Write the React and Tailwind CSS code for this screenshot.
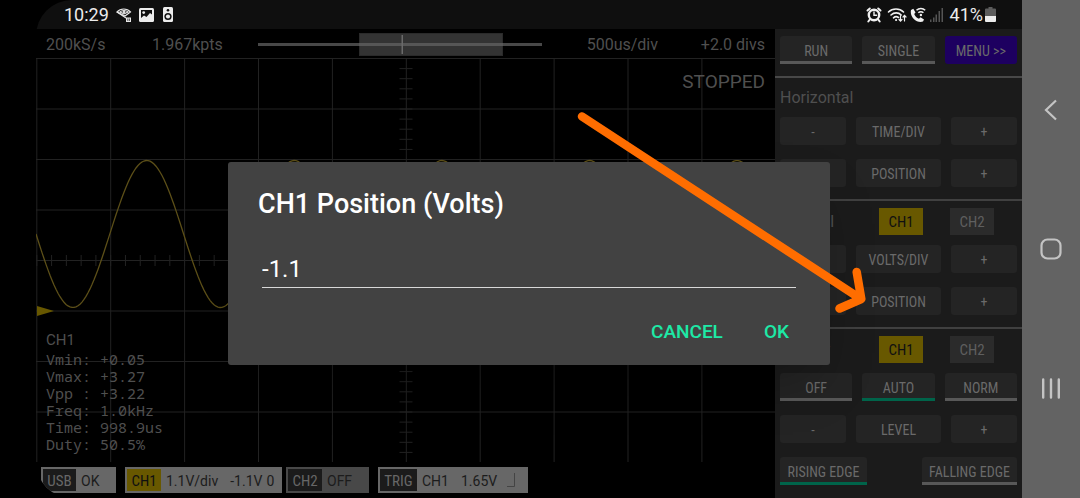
import React from "react";

const PLOT_W = 739;
const PLOT_H = 404;
const DIV_X = PLOT_W / 10;
const DIV_Y = PLOT_H / 8;

const wavePoints = Array.from({ length: 370 }, (_, i) => {
  const x = i * 2;
  const y = 176 + 73.5 * Math.sin((2 * Math.PI * x) / 147.6);
  return `${x},${y.toFixed(1)}`;
}).join(" ");

const measurements = [
  "Vmin: +0.05",
  "Vmax: +3.27",
  "Vpp : +3.22",
  "Freq: 1.0kHz",
  "Time: 998.9us",
  "Duty: 50.5%",
];

const condensed = "font-['Roboto_Condensed','Roboto',sans-serif]";

function StatusBar() {
  return (
    <header className="flex h-[29px] items-center bg-[#0f0f0f] pl-7 pr-[26px] text-[#ececec]">
      <span className="w-[52px] text-lg leading-5">10:29</span>
      <div className="flex items-center gap-[7px]">
        <svg width="16" height="16" viewBox="0 0 16 16" fill="none" stroke="#e8e8e8" aria-hidden="true">
          <path d="M1 5C4.500 1 11 1 14.500 5L9 9z" strokeWidth="1.200" />
          <path d="M1 5L10 11M4 5C6 3 10 3 12 5L8 7z" strokeWidth="1.100" />
          <circle cx="8" cy="5" r="1" fill="#e8e8e8" />
          <path d="M10 10.500h5v4.500h-5z" fill="#e8e8e8" stroke="none" />
          <path d="M11.800 11.500v2.500M13.400 11.500v2.500" stroke="#333" strokeWidth=".8" />
        </svg>
        <svg width="15" height="14" viewBox="0 0 15 14" aria-hidden="true">
          <rect width="15" height="14" rx="1.500" fill="#ececec" />
          <path d="M2 2h11v4.500L11 5L7.500 9L5 7.500L2 10z" fill="#0f0f0f" />
          <circle cx="4.700" cy="4.600" r="1.400" fill="#ececec" />
        </svg>
        <svg className="ml-0.5" width="10" height="15" viewBox="0 0 10 15" aria-hidden="true">
          <rect width="10" height="15" rx="1.500" fill="#ececec" />
          <circle cx="5" cy="3.300" r="1.300" fill="#0f0f0f" />
          <circle cx="5" cy="9.500" r="3.600" fill="#0f0f0f" />
          <circle cx="5" cy="9.500" r="2.100" fill="#ececec" />
        </svg>
      </div>
      <div className="ml-auto flex items-center">
        <svg className="mr-[5px]" width="16" height="16" viewBox="0 0 16 16" fill="none" stroke="#f0f0f0" strokeLinecap="round" aria-hidden="true">
          <circle cx="8" cy="8" r="5.200" strokeWidth="2.400" />
          <path d="M8 5v3.200h2.600" strokeWidth="1.400" />
          <path d="M1.500 3.500L3.800 1.500M14.500 3.500L12.200 1.500M3.800 12.500L2.300 14.500M12.200 12.500L13.700 14.500" strokeWidth="2" />
        </svg>
        <svg className="mr-[3px]" width="20" height="16" viewBox="0 0 20 16" fill="none" stroke="#f0f0f0" strokeLinecap="round" aria-hidden="true">
          <path d="M1.500 5C5.500 1 12.500 1 16.500 5" strokeWidth="1.600" />
          <path d="M4 8C7 5.200 11.500 5.200 14.200 8" strokeWidth="1.600" />
          <path d="M6.500 10.800C8 9.500 10 9.500 11.500 10.500" strokeWidth="1.600" />
          <path d="M9 13h.2" strokeWidth="2" />
          <path d="M13.500 8.500v5.500M12 12.500l1.500 1.700l1.500-1.700M17.500 14V8.500M16 10l1.500-1.700L19 10" strokeWidth="1.200" />
        </svg>
        <svg className="mr-1" width="16" height="16" viewBox="0 0 16 16" aria-hidden="true">
          <path d="M1 3L3.300 1.800L5.500 5.500L4.200 7C5 9.300 6.800 11 9 11.700L10.500 10.300L14 12.500L13 14.600C6.500 16.500 -.5 9.800 1 3z" fill="#f0f0f0" />
          <path d="M6.500 3.200C9 .8 12.800.8 15.200 3.200M8.300 5.800C9.800 4.300 12 4.300 13.400 5.800" fill="none" stroke="#f0f0f0" strokeWidth="1.500" />
          <circle cx="10.900" cy="8" r="1.200" fill="#f0f0f0" />
        </svg>
        <svg className="mr-1.5" width="14" height="15" viewBox="0 0 14 15" fill="#555" aria-hidden="true">
          <path d="M0 12.500h1.500V15H0zM3 10.500h1.500V15H3zM5.500 7.500H7V15H5.500zM8.500 4H10v11H8.500zM11.500 1H13v14h-1.500z" />
        </svg>
        <span className="text-lg leading-5">41%</span>
        <svg className="ml-0.5" width="11" height="15" viewBox="0 0 11 15" aria-hidden="true">
          <path d="M3.500 0h4v1.500H10q1 0 1 1V9H0V2.500q0-1 1-1h2.500z" fill="#5c5c5c" />
          <path d="M0 9h11v5q0 1-1 1H1q-1 0-1-1z" fill="#ececec" />
        </svg>
      </div>
    </header>
  );
}

function Timebase() {
  return (
    <div className="flex h-[29px] items-center px-2.5 pt-0.5 text-base leading-5 text-[#4f4f4f]">
      <span className="w-[106px]">200kS/s</span>
      <span className="w-[106px]">1.967kpts</span>
      <svg className="h-6 min-w-0 flex-1" viewBox="0 0 284 24" preserveAspectRatio="none" aria-hidden="true">
        <rect x="101.500" y=".5" width="143" height="22" fill="#333" stroke="#2a2a2a" />
        <rect y="10" width="284" height="3" fill="#484848" />
        <rect x="101" y="10" width="144" height="3" fill="#565656" />
        <rect x="143.500" y="2" width="1.500" height="19" fill="#6a6a6a" />
      </svg>
      <span className="w-[116px] text-right">500us/div</span>
      <span className="w-[107px] text-right">+2.0 divs</span>
    </div>
  );
}

function Plot() {
  const vertical = Array.from({ length: 10 }, (_, i) => i * DIV_X);
  const horizontal = Array.from({ length: 8 }, (_, i) => i * DIV_Y);
  const ticksX = Array.from({ length: 50 }, (_, i) => (i * DIV_X) / 5);
  const ticksY = Array.from({ length: 40 }, (_, i) => (i * DIV_Y) / 5);
  return (
    <div className="grid min-h-0 flex-1">
      <svg
        className="col-start-1 row-start-1 h-full w-full"
        viewBox={`0 0 ${PLOT_W} ${PLOT_H}`}
        preserveAspectRatio="none"
        role="img"
        aria-label="CH1 waveform"
      >
        <g stroke="#222">
          {vertical.map((x) => (
            <line key={x} x1={x + 0.8} x2={x + 0.8} y1="0" y2={PLOT_H} />
          ))}
          {horizontal.map((y) => (
            <line key={y} x1="0" x2={PLOT_W} y1={y + 0.5} y2={y + 0.5} />
          ))}
          {ticksX.map((x) => (
            <line key={x} x1={x + 0.8} x2={x + 0.8} y1="197" y2="208" />
          ))}
          {ticksY.slice(1).map((y) => (
            <line key={y} x1="363.500" x2="376.500" y1={y + 0.5} y2={y + 0.5} />
          ))}
        </g>
        <polyline points={wavePoints} fill="none" stroke="#5c4f18" strokeWidth="1.300" />
        <path d="M1 248L18 253L1 258z" fill="#675700" />
      </svg>
      <div className="col-start-1 row-start-1 flex flex-col justify-between px-2.5 pb-[9px] pt-3 text-[#4f4f4f]">
        <p className="text-right text-[19px] leading-6">STOPPED</p>
        <div className="text-[15px] leading-[17px]">
          <p className="mb-0.5">CH1</p>
          <pre className="font-['Noto_Sans_Mono','DejaVu_Sans_Mono',monospace]">{measurements.join("\n")}</pre>
        </div>
      </div>
    </div>
  );
}

function Badge({ children, tone = "bg-[#1b1b1b] text-[#676767]", width }) {
  return (
    <span className={`${condensed} flex shrink-0 items-center justify-center self-stretch pt-0.5 text-[15px] ${tone} ${width}`}>
      {children}
    </span>
  );
}

function Readouts() {
  return (
    <footer className="flex h-[26px] shrink-0 pl-[5px] text-sm leading-5 text-[#1c1c1c]">
      <div className="mr-[9px] flex w-[75px] items-center gap-[5px] bg-[#676767] p-0.5">
        <Badge width="w-[33px]">USB</Badge>
        <span className="pt-0.5">OK</span>
      </div>
      <div className="mr-1 flex w-[157px] items-center bg-[#676767] p-0.5">
        <Badge width="w-[34px]" tone="bg-[#685800] text-[#101010]">CH1</Badge>
        <span className="ml-[5px] pt-0.5">1.1V/div</span>
        <span className="ml-3 pt-0.5">-1.1V</span>
        <span className="ml-1 pt-0.5">0</span>
      </div>
      <div className="mr-[9px] flex w-[83px] items-center gap-[5px] bg-[#484848] p-0.5">
        <Badge width="w-[34px]">CH2</Badge>
        <span className="pt-0.5">OFF</span>
      </div>
      <div className="flex w-[150px] items-center bg-[#676767] p-0.5">
        <Badge width="w-[37px]">TRIG</Badge>
        <span className="ml-[5px] pt-0.5">CH1</span>
        <span className="ml-3 pt-0.5">1.65V</span>
        <svg className="ml-auto mr-2.5 shrink-0" width="9" height="15" viewBox="0 0 9 15" aria-hidden="true">
          <path d="M0 13.500H7.500V0" fill="none" stroke="#444" />
        </svg>
      </div>
    </footer>
  );
}

function PadButton({ children, look = "bg-[#242424] rounded-[3px] pt-0.5", className = "" }) {
  return (
    <button
      type="button"
      className={`${condensed} flex h-7 items-center justify-center whitespace-nowrap text-sm text-[#6a6a6a] ${look} ${className}`}
    >
      {children}
    </button>
  );
}

const underlined = "bg-[#242424] rounded-t-[3px] border-b-[3px] border-[#585858] pt-1";
const selected = "bg-[#242424] rounded-t-[3px] border-b-[3px] border-[#00644a] pt-1";

function StepRow({ label }) {
  return (
    <div className="flex gap-2.5">
      <PadButton className="w-[66px] grow">-</PadButton>
      <PadButton className="w-[85px] grow">{label}</PadButton>
      <PadButton className="w-[66px] grow">+</PadButton>
    </div>
  );
}

function ChannelRow({ label }) {
  return (
    <div className="flex h-[27px] items-center">
      <h2 className="w-[99px] text-base text-[#4f4f4f]">{label}</h2>
      <button type="button" className={`${condensed} h-full w-11 bg-[#685800] pt-0.5 text-[15px] text-[#101010]`}>CH1</button>
      <button type="button" className={`${condensed} ml-[27px] h-full w-11 bg-[#2b2b2b] pt-0.5 text-[15px] text-[#5f5f5f]`}>CH2</button>
    </div>
  );
}

function Controls() {
  return (
    <aside className="flex w-[247px] shrink-0 flex-col bg-[#1b1b1b]">
      <section className="grid grid-cols-3 gap-2.5 border-b-2 border-[#484848] px-[5px] pb-3 pt-[7px]">
        <PadButton look={underlined}>RUN</PadButton>
        <PadButton look={underlined}>SINGLE</PadButton>
        <PadButton look="bg-[#1d0060] rounded-[3px] pt-0.5">{"MENU >>"}</PadButton>
      </section>
      <section className="flex flex-col gap-3.5 border-b-2 border-[#404040] px-[5px] pb-3">
        <h2 className="-mb-3.5 h-[39px] text-base leading-[39px] text-[#4f4f4f]">Horizontal</h2>
        <StepRow label="TIME/DIV" />
        <StepRow label="POSITION" />
      </section>
      <section className="border-b-2 border-[#404040] px-[5px] pb-3 pt-[7px]">
        <ChannelRow label="Vertical" />
        <div className="mt-2.5 flex flex-col gap-3.5">
          <StepRow label="VOLTS/DIV" />
          <StepRow label="POSITION" />
        </div>
      </section>
      <section className="px-[5px] pb-3 pt-[7px]">
        <ChannelRow label="Trigger" />
        <div className="mt-2.5 flex flex-col gap-3.5">
          <div className="grid grid-cols-3 gap-2.5">
            <PadButton look={underlined}>OFF</PadButton>
            <PadButton look={selected}>AUTO</PadButton>
            <PadButton look={underlined}>NORM</PadButton>
          </div>
          <StepRow label="LEVEL" />
          <div className="flex justify-between">
            <PadButton look={selected} className="w-[87px]">RISING EDGE</PadButton>
            <PadButton look={underlined} className="w-[95px]">FALLING EDGE</PadButton>
          </div>
        </div>
      </section>
    </aside>
  );
}

function PositionDialog() {
  return (
    <div className="absolute inset-0 flex items-center justify-center">
      <form
        role="dialog"
        aria-labelledby="position-title"
        className="w-[602px] rounded-[3px] bg-[#424242] px-[30px] pb-[13px] pt-6 shadow-2xl"
        onSubmit={(e) => e.preventDefault()}
      >
        <label id="position-title" htmlFor="position" className="block text-[27px] font-medium leading-9 text-white">
          CH1 Position (Volts)
        </label>
        <input
          id="position"
          type="text"
          defaultValue="-1.1"
          className="mx-1 mt-6 block h-[42px] w-[534px] border-b border-[#d8d8d8] bg-transparent pt-1 text-2xl text-white outline-none"
        />
        <div className="mt-6 flex justify-end gap-[41px] px-[11px] text-[19px] font-medium leading-10 text-[#1de9a6]">
          <button type="button">CANCEL</button>
          <button type="submit">OK</button>
        </div>
      </form>
    </div>
  );
}

function NavBar() {
  return (
    <nav className="flex w-[58px] shrink-0 flex-col items-center justify-between bg-[#636363] py-[98px]" aria-label="System">
      <button type="button" aria-label="Back">
        <svg width="24" height="24" viewBox="0 0 24 24" fill="none" stroke="#c4c4c4" strokeWidth="2.200">
          <path d="M17 2.500L7 12L17 21.500" />
        </svg>
      </button>
      <button type="button" aria-label="Home">
        <svg width="24" height="24" viewBox="0 0 24 24" fill="none" stroke="#c4c4c4" strokeWidth="2.200">
          <rect x="2.500" y="2.500" width="19" height="19" rx="6" />
        </svg>
      </button>
      <button type="button" aria-label="Recents">
        <svg width="24" height="24" viewBox="0 0 24 24" stroke="#c4c4c4" strokeWidth="2.400" strokeLinecap="round">
          <path d="M4.200 3.500v18M12 3.500v18M19.800 3.500v18" />
        </svg>
      </button>
    </nav>
  );
}

export default function App() {
  return (
    <div className="relative flex min-h-screen bg-black pl-9 font-['Roboto',sans-serif]">
      <div className="flex min-w-0 flex-1 flex-col overflow-hidden rounded-l-[36px]">
        <StatusBar />
        <div className="relative flex flex-1">
          <main className="flex min-w-0 flex-1 flex-col pb-[5px]">
            <Timebase />
            <Plot />
            <div className="pt-[5px]">
              <Readouts />
            </div>
          </main>
          <Controls />
          <PositionDialog />
        </div>
      </div>
      <NavBar />
      <svg className="pointer-events-none absolute left-[574px] top-[108px]" width="300" height="212" viewBox="574 108 300 212" aria-hidden="true">
        <path
          d="M582 116.500L861 299M856.700 272L861.300 299L839.500 308.500"
          fill="none"
          stroke="#ff6d00"
          strokeWidth="8.500"
          strokeLinecap="round"
          strokeLinejoin="round"
        />
      </svg>
    </div>
  );
}
